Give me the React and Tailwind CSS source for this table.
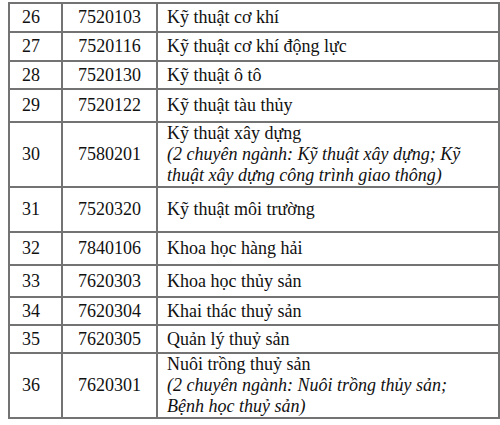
import React from 'react'

const rows = [
  { no: 26, code: '7520103', name: 'Kỹ thuật cơ khí', h: 'h-[29px]' },
  { no: 27, code: '7520116', name: 'Kỹ thuật cơ khí động lực', h: 'h-[29px]' },
  { no: 28, code: '7520130', name: 'Kỹ thuật ô tô', h: 'h-[28px]' },
  { no: 29, code: '7520122', name: 'Kỹ thuật tàu thủy', h: 'h-[33px]' },
  {
    no: 30,
    code: '7580201',
    name: 'Kỹ thuật xây dựng',
    note: ['(2 chuyên ngành: Kỹ thuật xây dựng; Kỹ', 'thuật xây dựng công trình giao thông)'],
    h: 'h-[65px]',
  },
  { no: 31, code: '7520320', name: 'Kỹ thuật môi trường', h: 'h-[45px]' },
  { no: 32, code: '7840106', name: 'Khoa học hàng hải', h: 'h-[33px]' },
  { no: 33, code: '7620303', name: 'Khoa học thủy sản', h: 'h-[32px]' },
  { no: 34, code: '7620304', name: 'Khai thác thuỷ sản', h: 'h-[28px]' },
  { no: 35, code: '7620305', name: 'Quản lý thuỷ sản', h: 'h-[28px]' },
  {
    no: 36,
    code: '7620301',
    name: 'Nuôi trồng thuỷ sản',
    note: ['(2 chuyên ngành: Nuôi trồng thủy sản;', 'Bệnh học thuỷ sản)'],
    h: 'h-[65px]',
  },
]

const cell = 'border-2 border-[#737373] align-middle'

export default function App() {
  return (
    <div className="w-[500px] h-[425px] bg-white pt-[2px] pl-[8px] font-['Liberation_Serif',serif] text-[#111] text-[18px] leading-[21px]">
      <table className="table-fixed border-collapse w-[490px]">
        <colgroup>
          <col className="w-[53px]" />
          <col className="w-[95px]" />
          <col className="w-[342px]" />
        </colgroup>
        <tbody>
          {rows.map((r) => (
            <tr key={r.no} className={r.h}>
              <td className={`${cell} pl-[12px]`}>{r.no}</td>
              <td className={`${cell} text-center`}>{r.code}</td>
              <td className={`${cell} pl-[9px] whitespace-nowrap`}>
                <div>{r.name}</div>
                {r.note && r.note.map((line) => (
                  <div key={line} className="italic">{line}</div>
                ))}
              </td>
            </tr>
          ))}
        </tbody>
      </table>
    </div>
  )
}
